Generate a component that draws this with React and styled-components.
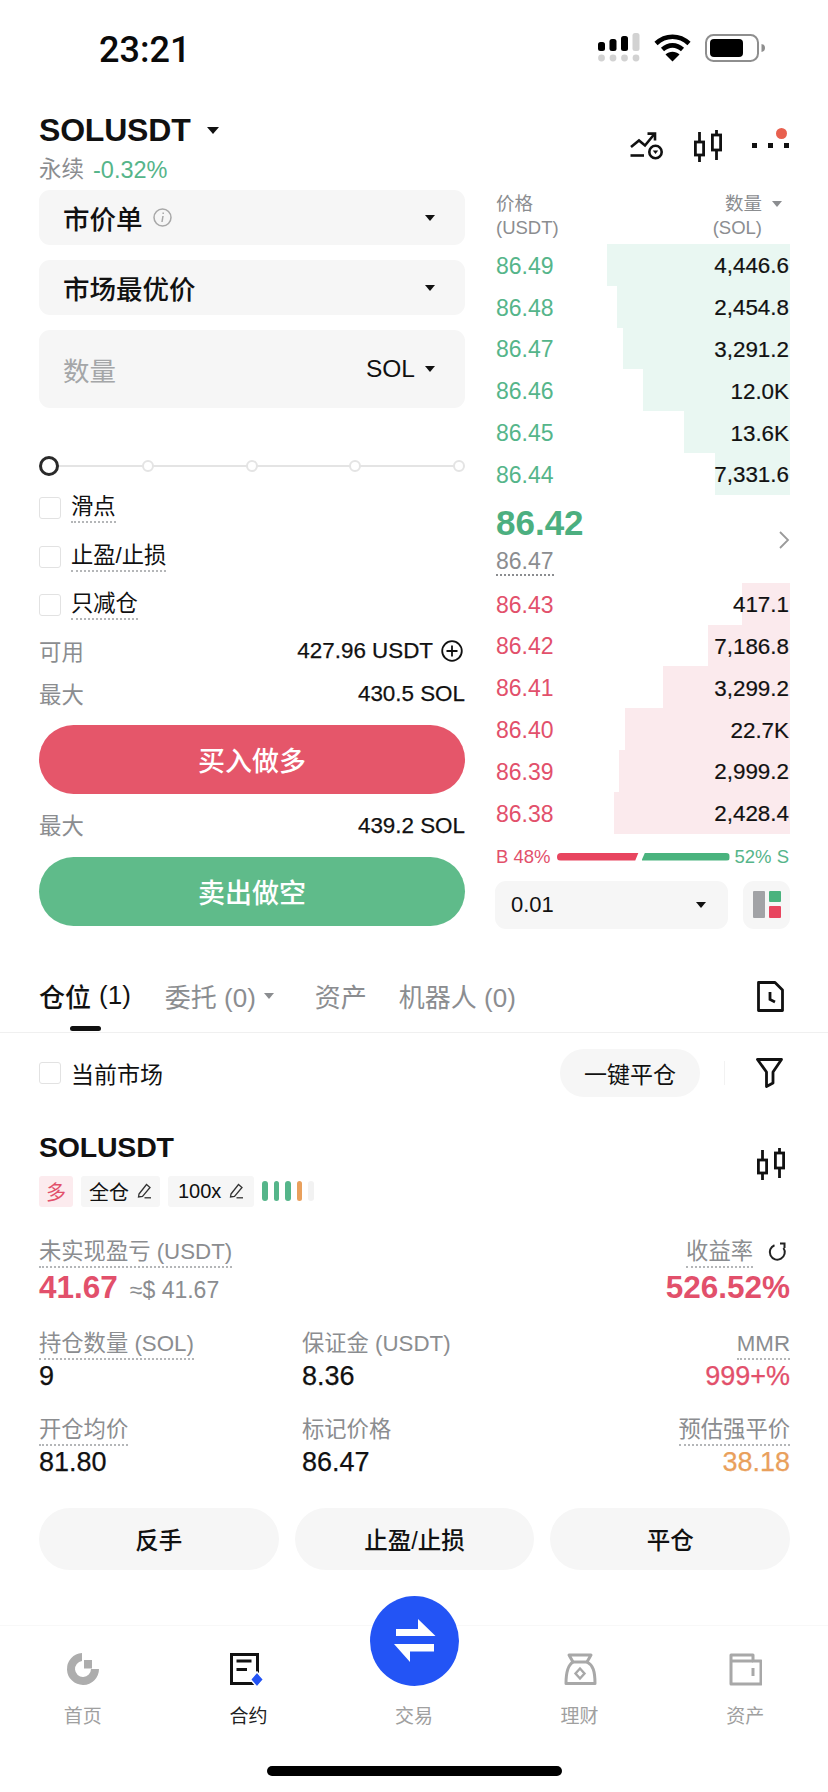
import React from "react";
import styled, { createGlobalStyle } from "styled-components";

const SANS = `"Liberation Sans", "Noto Sans CJK SC", sans-serif`;
const RED = "#e2506b";
const GREEN = "#55b58a";
const GRAY = "#8b8d90";

const GlobalStyle = createGlobalStyle`
  html, body {
    margin: 0;
    padding: 0;
    background: #ffffff;
  }
  body {
    font-family: ${SANS};
    color: #111111;
  }
  * {
    box-sizing: border-box;
  }
`;

const Page = styled.div`
  position: relative;
  width: 828px;
  height: 1792px;
  overflow: hidden;
  background: #ffffff;
  display: flex;
  flex-direction: column;
`;

/* status bar */
const StatusBar = styled.div`
  height: 90px;
  padding: 18px 0 0 99px;
  display: flex;
  align-items: flex-start;
  justify-content: space-between;
`;

const Clock = styled.div`
  font-family: Roboto, ${SANS};
  font-size: 36px;
  font-weight: 500;
  line-height: 64px;
  color: #0a0a0a;
`;

const StatusIcons = styled.div`
  display: flex;
  align-items: center;
  gap: 14px;
  padding: 15px 63px 0 0;
`;

/* header */
const Header = styled.div`
  height: 100px;
  padding: 20px 38px 0 39px;
  display: flex;
  justify-content: space-between;
`;

const TitleBlock = styled.div`
  display: flex;
  flex-direction: column;
`;

const TitleRow = styled.div`
  display: flex;
  align-items: center;
  gap: 16px;
  height: 40px;
`;

const Title = styled.div`
  font-size: 32px;
  font-weight: 700;
  letter-spacing: -0.2px;
`;

const Subtitle = styled.div`
  margin-top: 6px;
  display: flex;
  gap: 9px;
  font-size: 22.5px;
  line-height: 28px;
  color: ${GRAY};
`;

const Change = styled.span`
  color: ${GREEN};
  font-size: 23.5px;
`;

const HeaderIcons = styled.div`
  position: relative;
  display: flex;
  align-items: center;
  gap: 30px;
  height: 34px;
  margin-top: 19px;
`;

const NoticeDot = styled.span`
  position: absolute;
  right: 3.5px;
  top: -1.5px;
  width: 11px;
  height: 11px;
  border-radius: 50%;
  background: #e8604f;
`;

const Triangle = styled.span`
  display: inline-block;
  width: 0;
  height: 0;
  border-left: ${(p) => p.$size || 6}px solid transparent;
  border-right: ${(p) => p.$size || 6}px solid transparent;
  border-top: ${(p) => (p.$size || 6) * 1.25}px solid ${(p) => p.$color || "#111111"};
`;

/* trade area */
const TradeArea = styled.div`
  display: flex;
  gap: 30px;
  padding: 0 38px 0 39px;
`;

const FormColumn = styled.div`
  width: 426px;
  display: flex;
  flex-direction: column;
`;

const SelectBox = styled.div`
  height: ${(p) => p.$height || 55}px;
  margin-bottom: 15px;
  padding: 0 30px 0 24px;
  display: flex;
  align-items: center;
  justify-content: space-between;
  border-radius: 11px;
  background: #f6f6f6;
  font-size: 26.5px;
  font-weight: 500;
`;

const SelectLabel = styled.span`
  display: flex;
  align-items: center;
  gap: 10px;
`;

const Placeholder = styled.span`
  color: #a4a6a8;
  font-weight: 400;
`;

const UnitPick = styled.span`
  display: flex;
  align-items: center;
  gap: 10px;
`;

const Unit = styled.span`
  font-size: 24.5px;
`;

const Slider = styled.div`
  position: relative;
  height: 20px;
  margin: 33px 0 8px;
  display: flex;
  align-items: center;
  justify-content: space-between;
  &::before {
    content: "";
    position: absolute;
    left: 10px;
    right: 4px;
    top: 9px;
    height: 2px;
    background: #e4e4e4;
  }
`;

const Thumb = styled.span`
  position: relative;
  width: 20px;
  height: 20px;
  margin-right: -9px;
  border: 3px solid #2a2a2a;
  border-radius: 50%;
  background: #ffffff;
`;

const Stop = styled.span`
  position: relative;
  width: 12px;
  height: 12px;
  border: 2px solid #e4e4e4;
  border-radius: 50%;
  background: #ffffff;
`;

const CheckRow = styled.label`
  height: 48.5px;
  display: flex;
  align-items: center;
  gap: 10px;
  font-size: 22.3px;
`;

const Checkbox = styled.span`
  width: 22px;
  height: 22px;
  border: 1.5px solid #e2e2e2;
  border-radius: 3px;
  background: #ffffff;
`;

const Dotted = styled.span`
  border-bottom: 2px dotted ${(p) => p.$color || "#b4b6b8"};
  line-height: ${(p) => p.$line || 28}px;
`;

const InfoRow = styled.div`
  height: ${(p) => p.$height || 43}px;
  display: flex;
  align-items: center;
  justify-content: space-between;
  font-size: 22.4px;
`;

const InfoLabel = styled.span`
  margin-top: -3px;
  color: ${GRAY};
`;

const InfoValue = styled.span`
  display: flex;
  align-items: center;
  gap: 8px;
  -webkit-text-stroke: 0.25px #111111;
`;

const ActionButton = styled.div`
  height: 69px;
  margin-top: ${(p) => p.$top || 0}px;
  display: flex;
  align-items: center;
  justify-content: center;
  border-radius: 35px;
  background: ${(p) => p.$color};
  color: #ffffff;
  font-size: 27px;
  font-weight: 500;
`;

/* order book */
const BookColumn = styled.div`
  width: 295px;
  display: flex;
  flex-direction: column;
`;

const BookHead = styled.div`
  height: 54px;
  display: flex;
  justify-content: space-between;
  padding: 2px 0 0 1px;
  font-size: 18.5px;
  line-height: 24px;
  color: ${GRAY};
`;

const HeadRight = styled.div`
  display: flex;
  flex-direction: column;
  align-items: flex-end;
  padding-right: 28px;
  position: relative;
`;

const HeadMark = styled.span`
  position: absolute;
  right: 8px;
  top: 9px;
  display: flex;
`;

const BookRow = styled.div`
  position: relative;
  height: 41.8px;
  display: flex;
  align-items: center;
  justify-content: space-between;
  padding: 3px 1px 0;
  font-size: 22.4px;
`;

const Depth = styled.span`
  position: absolute;
  top: 0;
  bottom: 0;
  right: 0;
  background: ${(p) => (p.$side === "ask" ? "#e9f7f2" : "#fbeaed")};
`;

const Price = styled.span`
  position: relative;
  font-size: 23px;
  color: ${(p) => (p.$side === "ask" ? GREEN : RED)};
`;

const Qty = styled.span`
  position: relative;
  color: #111111;
  -webkit-text-stroke: 0.2px #111111;
`;

const Mid = styled.div`
  height: 88px;
  padding: 8px 0 0 1px;
  display: flex;
  justify-content: space-between;
  align-items: flex-start;
`;

const MidPrices = styled.div`
  display: flex;
  flex-direction: column;
  align-items: flex-start;
`;

const LastPrice = styled.div`
  font-size: 35px;
  font-weight: 700;
  line-height: 40px;
  color: #4caf80;
`;

const MarkPrice = styled.div`
  margin-top: 5px;
  font-size: 23px;
  color: ${GRAY};
`;

const ChevronSlot = styled.div`
  padding-top: 27px;
`;

const Ratio = styled.div`
  height: 46px;
  display: flex;
  align-items: center;
  padding: 0 1px;
  font-size: 18.5px;
`;

const RatioText = styled.span`
  margin-left: ${(p) => (p.$push ? "auto" : 0)};
  color: ${(p) => p.$color};
  white-space: nowrap;
`;

const RatioBar = styled.span`
  height: 8px;
  background: ${(p) => p.$color};
  width: ${(p) => p.$width}px;
  margin-left: ${(p) => p.$gap}px;
  border-radius: ${(p) => p.$radius};
  clip-path: ${(p) => p.$clip};
`;

const BookFoot = styled.div`
  display: flex;
  justify-content: space-between;
  margin-top: 1px;
`;

const StepSelect = styled.div`
  width: 233px;
  height: 48px;
  padding: 0 22px 0 16px;
  display: flex;
  align-items: center;
  justify-content: space-between;
  border-radius: 11px;
  background: #f6f6f6;
  font-size: 22px;
`;

const LayoutButton = styled.div`
  width: 47px;
  height: 48px;
  display: flex;
  align-items: center;
  justify-content: center;
  border-radius: 11px;
  background: #f6f6f6;
`;

/* positions */
const Tabs = styled.div`
  position: relative;
  margin-top: 41px;
  height: 63px;
  padding: 0 38px 0 39px;
  display: flex;
  align-items: flex-start;
  border-bottom: 1.5px solid #f0f0f0;
`;

const Tab = styled.div`
  display: flex;
  align-items: center;
  gap: 8px;
  height: 52px;
  margin-right: ${(p) => p.$gap || 0}px;
  font-size: 26px;
  font-weight: ${(p) => (p.$active ? 500 : 400)};
  color: ${(p) => (p.$active ? "#111111" : GRAY)};
`;

const Indicator = styled.span`
  position: absolute;
  left: 70px;
  bottom: 1px;
  width: 31px;
  height: 5px;
  border-radius: 3px;
  background: #111111;
`;

const TabTool = styled.div`
  margin-left: auto;
  padding: 11px 6px 0 0;
`;

const FilterRow = styled.div`
  height: 80px;
  padding: 0 45px 0 39px;
  display: flex;
  align-items: center;
  gap: 10px;
  font-size: 23px;
`;

const CloseAll = styled.div`
  margin-left: auto;
  width: 140px;
  height: 48px;
  display: flex;
  align-items: center;
  justify-content: center;
  border-radius: 24px;
  background: #f6f6f6;
  font-size: 23px;
`;

const ThinRule = styled.span`
  width: 1px;
  height: 24px;
  margin: 0 21px 0 14px;
  background: #f2f2f2;
`;

const PositionHead = styled.div`
  padding: 17px 38px 0 39px;
  display: flex;
  justify-content: space-between;
  align-items: flex-start;
`;

const PositionTool = styled.div`
  margin: 18px 5px 0 0;
`;

const PositionTitle = styled.div`
  font-size: 28.5px;
  font-weight: 700;
  line-height: 34px;
  letter-spacing: -0.2px;
`;

const TagRow = styled.div`
  margin-top: 12px;
  display: flex;
  align-items: center;
  gap: 8px;
`;

const Tag = styled.div`
  height: 31px;
  padding: 0 ${(p) => p.$pad || 8}px;
  display: flex;
  align-items: center;
  gap: 7px;
  border-radius: 3px;
  background: ${(p) => (p.$long ? "#fcebee" : "#f6f6f6")};
  color: ${(p) => (p.$long ? RED : "#111111")};
  font-size: 20px;
`;

const Pips = styled.div`
  display: flex;
  gap: 6px;
`;

const Pip = styled.span`
  width: 5.5px;
  height: 20px;
  border-radius: 3px;
  background: ${(p) => p.$color};
`;

const Metrics = styled.div`
  margin-top: 31px;
  padding: 0 38px 0 39px;
  display: grid;
  grid-template-columns: 263px 1fr auto;
`;

const Metric = styled.div`
  display: flex;
  flex-direction: column;
  align-items: ${(p) => (p.$right ? "flex-end" : "flex-start")};
  height: ${(p) => p.$height || 80}px;
`;

const MetricLabel = styled.div`
  display: flex;
  align-items: flex-start;
  gap: 14px;
  height: 28px;
  font-size: 22.3px;
  line-height: 28px;
  color: ${GRAY};
`;

const MetricValue = styled.div`
  margin-top: ${(p) => p.$top ?? 1}px;
  font-size: ${(p) => p.$size || 27}px;
  font-weight: ${(p) => p.$weight || 400};
  line-height: 34px;
  color: ${(p) => p.$color || "#111111"};
  -webkit-text-stroke: ${(p) => (p.$weight ? 0 : 0.25)}px ${(p) => p.$color || "#111111"};
  display: flex;
  align-items: baseline;
  gap: 12px;
`;

const Approx = styled.span`
  font-size: 23px;
  font-weight: 400;
  color: ${GRAY};
`;

const PositionActions = styled.div`
  margin-top: 12px;
  padding: 0 38px 0 39px;
  display: grid;
  grid-template-columns: repeat(3, 1fr);
  gap: 16px;
`;

const PositionButton = styled.div`
  height: 62px;
  display: flex;
  align-items: center;
  justify-content: center;
  border-radius: 31px;
  background: #f6f6f6;
  font-size: 23.5px;
  font-weight: 500;
`;

/* bottom tab bar */
const TabBar = styled.div`
  position: relative;
  margin-top: 55px;
  height: 167px;
  border-top: 1.5px solid #f8f8f8;
  padding-top: 26px;
  display: grid;
  grid-template-columns: repeat(5, 165.6px);
`;

const NavItem = styled.div`
  display: flex;
  flex-direction: column;
  align-items: center;
  font-size: 19px;
  color: ${(p) => (p.$active ? "#222222" : "#a0a0a0")};
`;

const NavIcon = styled.div`
  height: 34px;
  margin-bottom: 15px;
  display: flex;
  align-items: center;
`;

const SwapButton = styled.div`
  position: absolute;
  left: 370px;
  top: -30px;
  width: 89px;
  height: 90px;
  display: flex;
  align-items: center;
  justify-content: center;
  border-radius: 50%;
  background: #2354f5;
`;

const HomeBar = styled.div`
  position: absolute;
  left: 267px;
  bottom: 16px;
  width: 295px;
  height: 10px;
  border-radius: 5px;
  background: #000000;
`;

/* drawings */
const SignalIcon = () => (
  <svg width="42" height="30" viewBox="0 0 42 30">
    <rect x="0" y="9" width="7" height="9" rx="2.5" fill="#000" />
    <rect x="11.5" y="6" width="7" height="12" rx="2.5" fill="#000" />
    <rect x="23" y="3" width="7" height="15" rx="2.5" fill="#000" />
    <rect x="34.5" y="0" width="7" height="18" rx="2.5" fill="#d2d2d2" />
    {[3.5, 15, 26.5, 38].map((x) => (
      <circle key={x} cx={x} cy="25" r="3.4" fill="#d2d2d2" />
    ))}
  </svg>
);

const WifiIcon = () => (
  <svg width="37" height="28" viewBox="0 0 37 28">
    <path d="M2 9.5C11.5 0.5 25.5 0.5 35 9.5" fill="none" stroke="#000" strokeWidth="4.6" />
    <path d="M8.5 15.5C14.5 10 22.5 10 28.5 15.5" fill="none" stroke="#000" strokeWidth="4.6" />
    <path d="M18.5 27.5L11.5 20.5C15.5 16.8 21.5 16.8 25.5 20.5Z" fill="#000" />
  </svg>
);

const BatteryIcon = () => (
  <svg width="60" height="28" viewBox="0 0 60 28">
    <rect x="1" y="1" width="52" height="26" rx="7.5" fill="#fff" stroke="#8e8e8e" strokeWidth="2" />
    <rect x="5" y="5" width="33" height="18" rx="4" fill="#000" />
    <path d="M56.5 10C59 10.5 60 12 60 14C60 16 59 17.5 56.5 18Z" fill="#8e8e8e" />
  </svg>
);

const TrendIcon = () => (
  <svg width="34" height="28" viewBox="0 0 34 28" fill="none" stroke="#111" strokeWidth="2.6">
    <path d="M1 15L9 8.5L15 13.5L24 2.5" />
    <path d="M17.5 1.6H25V8.5" />
    <path d="M0.5 23.5H14" />
    <circle cx="25.5" cy="20" r="6.2" />
    <path d="M22.8 18.6H28.2L25.5 22Z" fill="#111" stroke="none" />
  </svg>
);

const CandleIcon = () => (
  <svg width="28" height="32" viewBox="0 0 28 32" fill="none" stroke="#111" strokeWidth="2.8">
    <path d="M5.5 2V32" />
    <rect x="1.4" y="12" width="8.2" height="13" fill="#fff" />
    <path d="M22.5 0V30" />
    <rect x="18.4" y="5" width="8.2" height="15" fill="#fff" />
  </svg>
);

const MoreDots = () => (
  <svg width="38" height="6" viewBox="0 0 38 6">
    <rect x="0" y="0" width="5" height="5" fill="#111" />
    <rect x="16" y="0" width="5" height="5" fill="#111" />
    <rect x="32" y="0" width="5" height="5" fill="#111" />
  </svg>
);

const InfoIcon = () => (
  <svg width="19" height="19" viewBox="0 0 19 19" fill="none" stroke="#a8a8a8" strokeWidth="1.5">
    <circle cx="9.5" cy="9.5" r="8.5" />
    <path d="M10 8L9 14" />
    <path d="M10.2 4.6V6" />
  </svg>
);

const PlusCircle = () => (
  <svg width="24" height="22" viewBox="0 0 24 22" fill="none" stroke="#111" strokeWidth="1.8">
    <circle cx="11" cy="11" r="9.8" />
    <path d="M11 5.5V16.5M5.5 11H16.5" />
  </svg>
);

const Chevron = () => (
  <svg width="12" height="20" viewBox="0 0 12 20" fill="none" stroke="#9a9a9a" strokeWidth="1.8">
    <path d="M2 2L10 10L2 18" />
  </svg>
);

const LayoutIcon = () => (
  <svg width="28" height="27" viewBox="0 0 28 27">
    <rect x="0" y="0" width="12" height="27" rx="1" fill="#a2a3a6" />
    <rect x="16" y="0" width="12" height="11" rx="1" fill="#4ab37e" />
    <rect x="16" y="15" width="12" height="12" rx="1" fill="#e8455f" />
  </svg>
);

const HistoryIcon = () => (
  <svg width="27" height="31" viewBox="0 0 27 31" fill="none" stroke="#111" strokeWidth="2.8">
    <path d="M1.5 1.5H18L25.5 9V29.5H1.5Z" strokeLinejoin="round" />
    <path d="M13 11V18.5L18 21" />
  </svg>
);

const FilterIcon = () => (
  <svg width="27" height="30" viewBox="0 0 27 30" fill="none" stroke="#111" strokeWidth="2.8">
    <path d="M1.5 1.5H25.5L17 14V25L10.5 28.5V14Z" strokeLinejoin="round" />
  </svg>
);

const PenIcon = () => (
  <svg width="16" height="16" viewBox="0 0 16 16" fill="none" stroke="#333" strokeWidth="1.3">
    <path d="M3 11L10.5 1.5L14 4.5L6.5 13.5L2.5 14Z" />
    <path d="M8.5 14.8H15" />
  </svg>
);

const RefreshIcon = () => (
  <svg width="23" height="26" viewBox="0 0 23 26" fill="none" stroke="#222" strokeWidth="2">
    <path d="M7.5 7.2A7.5 7.5 0 1 0 16.5 10" />
    <path d="M13 5.5H17.5V10" />
  </svg>
);

const SwapIcon = () => (
  <svg width="42" height="43" viewBox="0 0 42 43" fill="#ffffff">
    <path d="M2 10H24V0L41.5 17H2Z" />
    <path d="M0 25H40V32.5H16V43Z" />
  </svg>
);

const HomeNavIcon = () => (
  <svg width="34" height="34" viewBox="0 0 34 34" fill="#adadad">
    <path d="M16 1A16 16 0 1 0 33 17H25A8 8 0 1 1 16 9Z" />
    <rect x="18" y="8" width="8" height="8.5" />
  </svg>
);

const ContractNavIcon = () => (
  <svg width="36" height="34" viewBox="0 0 36 34" fill="none">
    <rect x="1.5" y="2.5" width="26" height="29" stroke="#111" strokeWidth="3" />
    <path d="M6.5 9H21.5M6.5 17.5H17" stroke="#111" strokeWidth="3" />
    <path d="M27 20L33.5 27.5L27 35L20.5 27.5Z" fill="#2354f5" stroke="#fff" strokeWidth="1.5" />
  </svg>
);

const EarnNavIcon = () => (
  <svg width="34" height="34" viewBox="0 0 34 34" fill="none" stroke="#a8a8a8" strokeWidth="3">
    <path d="M6 3H28L24 10C30 13 32 19 32 31.5H3C3 19 5 13 10 10Z" strokeLinejoin="round" />
    <path d="M10 10H24" />
    <path d="M17 16.5L21.5 21.5L17 26.5L12.5 21.5Z" strokeWidth="2.4" />
  </svg>
);

const WalletNavIcon = () => (
  <svg width="34" height="34" viewBox="0 0 34 34" fill="none" stroke="#a8a8a8" strokeWidth="3">
    <path d="M3 3H25V9H33V32H3Z" strokeLinejoin="round" />
    <path d="M3 9H25" />
    <path d="M25 16V24" />
  </svg>
);

const asks = [
  ["86.49", "4,446.6", 183],
  ["86.48", "2,454.8", 173],
  ["86.47", "3,291.2", 167],
  ["86.46", "12.0K", 147],
  ["86.45", "13.6K", 106],
  ["86.44", "7,331.6", 75],
];

const bids = [
  ["86.43", "417.1", 48],
  ["86.42", "7,186.8", 82],
  ["86.41", "3,299.2", 127],
  ["86.40", "22.7K", 165],
  ["86.39", "2,999.2", 171],
  ["86.38", "2,428.4", 176],
];

const BookRows = ({ rows, side }) =>
  rows.map(([price, qty, depth]) => (
    <BookRow key={price}>
      <Depth $side={side} style={{ width: depth }} />
      <Price $side={side}>{price}</Price>
      <Qty>{qty}</Qty>
    </BookRow>
  ));

export default function App() {
  return (
    <Page>
      <GlobalStyle />

      <StatusBar>
        <Clock>23:21</Clock>
        <StatusIcons>
          <SignalIcon />
          <WifiIcon />
          <BatteryIcon />
        </StatusIcons>
      </StatusBar>

      <Header>
        <TitleBlock>
          <TitleRow>
            <Title>SOLUSDT</Title>
            <Triangle $size={6} />
          </TitleRow>
          <Subtitle>
            永续 <Change>-0.32%</Change>
          </Subtitle>
        </TitleBlock>
        <HeaderIcons>
          <TrendIcon />
          <CandleIcon />
          <MoreDots />
          <NoticeDot />
        </HeaderIcons>
      </Header>

      <TradeArea>
        <FormColumn>
          <SelectBox>
            <SelectLabel>
              市价单 <InfoIcon />
            </SelectLabel>
            <Triangle $size={5.5} />
          </SelectBox>
          <SelectBox>
            <span>市场最优价</span>
            <Triangle $size={5.5} />
          </SelectBox>
          <SelectBox $height={78}>
            <Placeholder>数量</Placeholder>
            <UnitPick>
              <Unit>SOL</Unit>
              <Triangle $size={5.5} />
            </UnitPick>
          </SelectBox>

          <Slider>
            <Thumb />
            <Stop />
            <Stop />
            <Stop />
            <Stop />
          </Slider>

          <CheckRow>
            <Checkbox />
            <Dotted>滑点</Dotted>
          </CheckRow>
          <CheckRow>
            <Checkbox />
            <Dotted>止盈/止损</Dotted>
          </CheckRow>
          <CheckRow>
            <Checkbox />
            <Dotted>只减仓</Dotted>
          </CheckRow>

          <InfoRow>
            <InfoLabel>可用</InfoLabel>
            <InfoValue>
              427.96 USDT <PlusCircle />
            </InfoValue>
          </InfoRow>
          <InfoRow>
            <InfoLabel>最大</InfoLabel>
            <InfoValue>430.5 SOL</InfoValue>
          </InfoRow>
          <ActionButton $color="#e5566a" $top={9.5}>
            买入做多
          </ActionButton>
          <InfoRow $height={63}>
            <InfoLabel>最大</InfoLabel>
            <InfoValue>439.2 SOL</InfoValue>
          </InfoRow>
          <ActionButton $color="#5fbb8a">卖出做空</ActionButton>
        </FormColumn>

        <BookColumn>
          <BookHead>
            <div>
              <div>价格</div>
              <div>(USDT)</div>
            </div>
            <HeadRight>
              <div>数量</div>
              <div>(SOL)</div>
              <HeadMark>
                <Triangle $size={5} $color="#8b8d90" />
              </HeadMark>
            </HeadRight>
          </BookHead>

          <BookRows rows={asks} side="ask" />

          <Mid>
            <MidPrices>
              <LastPrice>86.42</LastPrice>
              <MarkPrice>
                <Dotted $color="#8b8d90" $line={26}>
                  86.47
                </Dotted>
              </MarkPrice>
            </MidPrices>
            <ChevronSlot>
              <Chevron />
            </ChevronSlot>
          </Mid>

          <BookRows rows={bids} side="bid" />

          <Ratio>
            <RatioText $color={RED}>B 48%</RatioText>
            <RatioBar
              $color="#e8455f"
              $width={82}
              $gap={6}
              $radius="4px 0 0 4px"
              $clip="polygon(0 0, 100% 0, 96% 100%, 0 100%)"
            />
            <RatioBar
              $color="#4ab37e"
              $width={88}
              $gap={3}
              $radius="0 4px 4px 0"
              $clip="polygon(4% 0, 100% 0, 100% 100%, 0 100%)"
            />
            <RatioText $color={GREEN} $push>
              52% S
            </RatioText>
          </Ratio>

          <BookFoot>
            <StepSelect>
              0.01
              <Triangle $size={5.5} />
            </StepSelect>
            <LayoutButton>
              <LayoutIcon />
            </LayoutButton>
          </BookFoot>
        </BookColumn>
      </TradeArea>

      <Tabs>
        <Tab $active $gap={34}>
          仓位 <span>(1)</span>
        </Tab>
        <Tab $gap={41}>
          委托 (0) <Triangle $size={5.5} $color="#8b8d90" />
        </Tab>
        <Tab $gap={32}>资产</Tab>
        <Tab>机器人 (0)</Tab>
        <TabTool>
          <HistoryIcon />
        </TabTool>
        <Indicator />
      </Tabs>

      <FilterRow>
        <Checkbox />
        当前市场
        <CloseAll>一键平仓</CloseAll>
        <ThinRule />
        <FilterIcon />
      </FilterRow>

      <PositionHead>
        <div>
          <PositionTitle>SOLUSDT</PositionTitle>
          <TagRow>
            <Tag $long $pad={7}>
              多
            </Tag>
            <Tag>
              全仓 <PenIcon />
            </Tag>
            <Tag $pad={10}>
              100x <PenIcon />
            </Tag>
            <Pips>
              <Pip $color="#55b58a" />
              <Pip $color="#55b58a" />
              <Pip $color="#55b58a" />
              <Pip $color="#e9a05c" />
              <Pip $color="#f2f2f2" />
            </Pips>
          </TagRow>
        </div>
        <PositionTool>
          <CandleIcon />
        </PositionTool>
      </PositionHead>

      <Metrics>
        <Metric $height={92}>
          <MetricLabel>
            <Dotted>未实现盈亏 (USDT)</Dotted>
          </MetricLabel>
          <MetricValue $top={4} $size={31.5} $weight={700} $color={RED}>
            41.67 <Approx>≈$ 41.67</Approx>
          </MetricValue>
        </Metric>
        <div />
        <Metric $right $height={92}>
          <MetricLabel>
            <Dotted>收益率</Dotted>
            <RefreshIcon />
          </MetricLabel>
          <MetricValue $top={4} $size={31.5} $weight={700} $color={RED}>
            526.52%
          </MetricValue>
        </Metric>

        <Metric $height={86}>
          <MetricLabel>
            <Dotted>持仓数量 (SOL)</Dotted>
          </MetricLabel>
          <MetricValue>9</MetricValue>
        </Metric>
        <Metric $height={86}>
          <MetricLabel>保证金 (USDT)</MetricLabel>
          <MetricValue>8.36</MetricValue>
        </Metric>
        <Metric $right $height={86}>
          <MetricLabel>
            <Dotted>MMR</Dotted>
          </MetricLabel>
          <MetricValue $color={RED}>999+%</MetricValue>
        </Metric>

        <Metric>
          <MetricLabel>
            <Dotted>开仓均价</Dotted>
          </MetricLabel>
          <MetricValue>81.80</MetricValue>
        </Metric>
        <Metric>
          <MetricLabel>标记价格</MetricLabel>
          <MetricValue>86.47</MetricValue>
        </Metric>
        <Metric $right>
          <MetricLabel>
            <Dotted>预估强平价</Dotted>
          </MetricLabel>
          <MetricValue $color="#e9a05c">38.18</MetricValue>
        </Metric>
      </Metrics>

      <PositionActions>
        <PositionButton>反手</PositionButton>
        <PositionButton>止盈/止损</PositionButton>
        <PositionButton>平仓</PositionButton>
      </PositionActions>

      <TabBar>
        <NavItem>
          <NavIcon>
            <HomeNavIcon />
          </NavIcon>
          首页
        </NavItem>
        <NavItem $active>
          <NavIcon>
            <ContractNavIcon />
          </NavIcon>
          合约
        </NavItem>
        <NavItem>
          <NavIcon />
          交易
        </NavItem>
        <NavItem>
          <NavIcon>
            <EarnNavIcon />
          </NavIcon>
          理财
        </NavItem>
        <NavItem>
          <NavIcon>
            <WalletNavIcon />
          </NavIcon>
          资产
        </NavItem>
        <SwapButton>
          <SwapIcon />
        </SwapButton>
      </TabBar>

      <HomeBar />
    </Page>
  );
}
